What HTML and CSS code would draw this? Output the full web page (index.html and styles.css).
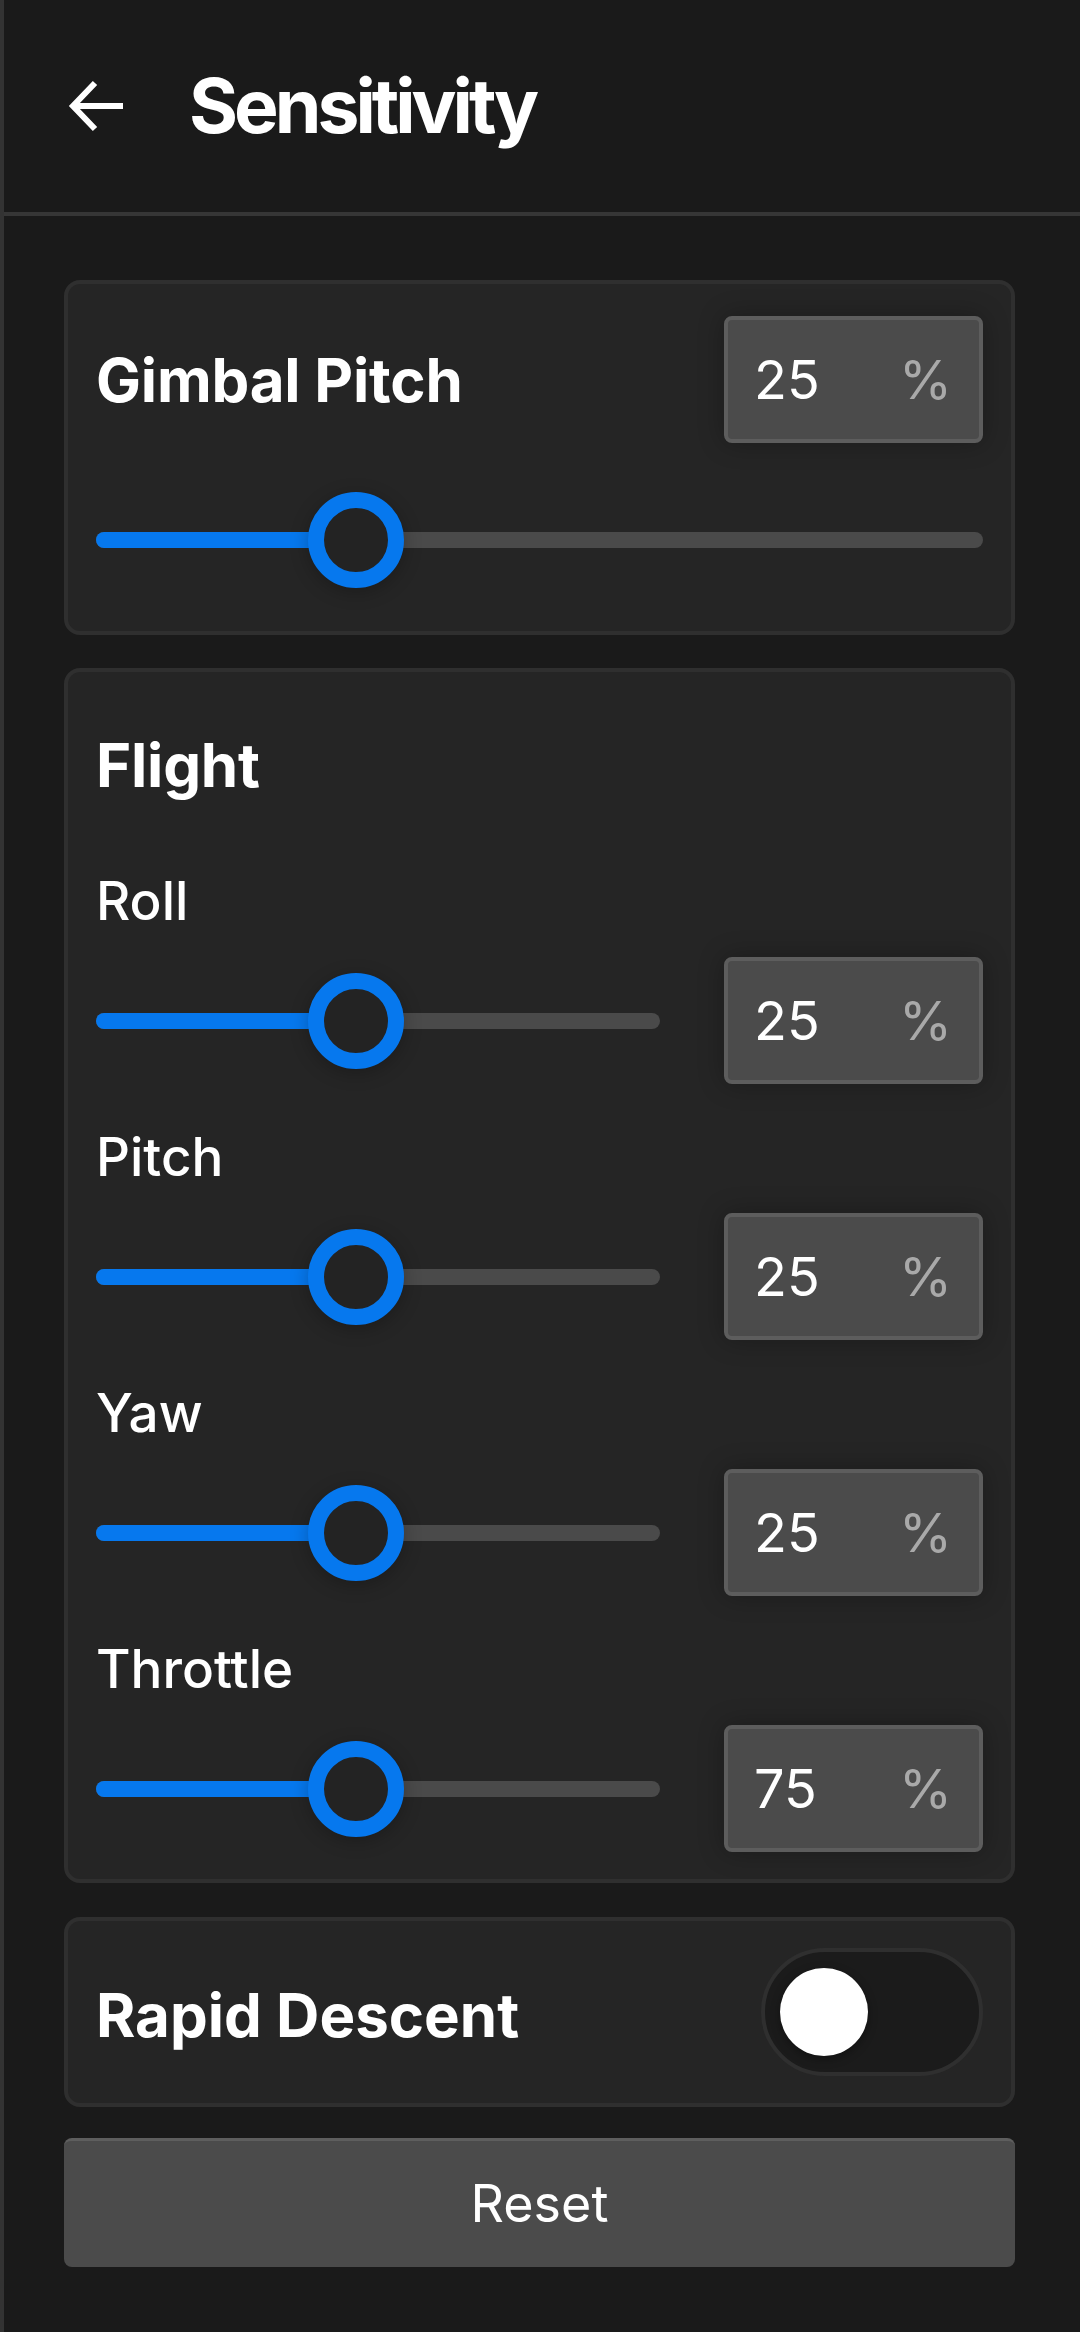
FILE: index.html
```html
<!DOCTYPE html>
<html lang="en">
<head>
<meta charset="utf-8">
<meta name="viewport" content="width=1080">
<title>Sensitivity</title>
<link rel="stylesheet" href="styles.css">
</head>
<body>
<header class="topbar">
  <svg class="back" viewBox="0 0 60 60" width="60" height="60" aria-hidden="true">
    <polyline points="29,7 7,30 29,53" fill="none" stroke="#fff" stroke-width="6" stroke-linejoin="miter" stroke-linecap="butt"/>
    <line x1="8" y1="30" x2="57" y2="30" stroke="#fff" stroke-width="6"/>
  </svg>
  <h1 class="title">Sensitivity</h1>
</header>

<main class="content">
  <section class="card card-gimbal">
    <div class="card-head">
      <h2 class="card-title">Gimbal Pitch</h2>
      <div class="value-box"><span class="num">25</span><span class="unit">%</span></div>
    </div>
    <div class="slider slider-gimbal">
      <div class="track"><div class="fill" style="width:260px"></div></div>
      <div class="thumb" style="left:212px"></div>
    </div>
  </section>

  <section class="card card-flight">
    <h2 class="card-title flight-title">Flight</h2>

    <div class="axis">
      <div class="axis-label">Roll</div>
      <div class="axis-row">
        <div class="slider">
          <div class="track"><div class="fill" style="width:260px"></div></div>
          <div class="thumb" style="left:212px"></div>
        </div>
        <div class="value-box"><span class="num">25</span><span class="unit">%</span></div>
      </div>
    </div>

    <div class="axis">
      <div class="axis-label">Pitch</div>
      <div class="axis-row">
        <div class="slider">
          <div class="track"><div class="fill" style="width:260px"></div></div>
          <div class="thumb" style="left:212px"></div>
        </div>
        <div class="value-box"><span class="num">25</span><span class="unit">%</span></div>
      </div>
    </div>

    <div class="axis">
      <div class="axis-label">Yaw</div>
      <div class="axis-row">
        <div class="slider">
          <div class="track"><div class="fill" style="width:260px"></div></div>
          <div class="thumb" style="left:212px"></div>
        </div>
        <div class="value-box"><span class="num">25</span><span class="unit">%</span></div>
      </div>
    </div>

    <div class="axis">
      <div class="axis-label">Throttle</div>
      <div class="axis-row">
        <div class="slider">
          <div class="track"><div class="fill" style="width:260px"></div></div>
          <div class="thumb" style="left:212px"></div>
        </div>
        <div class="value-box"><span class="num">75</span><span class="unit">%</span></div>
      </div>
    </div>
  </section>

  <section class="card card-toggle">
    <h2 class="card-title toggle-title">Rapid Descent</h2>
    <div class="switch"><div class="knob"></div></div>
  </section>

  <button class="reset" type="button">Reset</button>
</main>
</body>
</html>
```

FILE: styles.css
```css
* {
  box-sizing: border-box;
}

html, body {
  margin: 0;
  padding: 0;
}

body {
  min-height: 100vh;
  background: #1a1a1a;
  border-left: 4px solid #333333;
  color: #ffffff;
  font-family: Inter, "Noto Sans", "Liberation Sans", sans-serif;
}

.topbar {
  height: 216px;
  border-bottom: 4px solid #363636;
  display: flex;
  align-items: center;
  padding-left: 62px;
}

.back {
  display: block;
  flex: none;
}

.title {
  margin: 0 0 0 63px;
  font-size: 75px;
  font-weight: 700;
  line-height: 88px;
  letter-spacing: -4px;
}

.content {
  padding: 64px 65px 40px 60px;
  display: flex;
  flex-direction: column;
}

.card {
  background: #252525;
  border: 4px solid #2f2f2f;
  border-radius: 16px;
  padding: 0 28px;
}

.card-title {
  margin: 0;
  font-size: 60px;
  font-weight: 700;
  line-height: 72px;
  letter-spacing: -0.2px;
}

/* Gimbal card */
.card-gimbal {
  padding-top: 32px;
  padding-bottom: 28px;
}

.card-head {
  display: flex;
  justify-content: space-between;
  align-items: center;
}

.slider-gimbal {
  margin-top: 34px;
}

/* Value input box */
.value-box {
  flex: none;
  width: 259px;
  height: 127px;
  background: #4b4b4b;
  border: 4px solid #5d5d5d;
  border-radius: 8px;
  box-shadow: 0 0 26px rgba(0, 0, 0, 0.28);
  display: flex;
  align-items: center;
  justify-content: space-between;
  padding: 0 27px 0 26px;
  font-size: 54px;
  line-height: 64px;
  font-weight: 400;
}

.num {
  color: #ffffff;
}

.unit {
  color: #a9a9a9;
}

/* Slider */
.slider {
  position: relative;
  height: 126px;
  display: flex;
  align-items: center;
  flex: 1;
}

.track {
  width: 100%;
  height: 16px;
  border-radius: 8px;
  background: #4a4a4a;
  overflow: hidden;
}

.fill {
  height: 100%;
  background: #0678ee;
}

.thumb {
  position: absolute;
  top: 15px;
  width: 96px;
  height: 96px;
  border-radius: 50%;
  border: 16px solid #0678ee;
  background: #232323;
  box-shadow: 0 4px 18px rgba(0, 0, 0, 0.25);
}

/* Flight card */
.card-flight {
  margin-top: 33px;
  padding-top: 57px;
  padding-bottom: 27px;
}

.flight-title {
  margin-bottom: 69px;
}

.axis + .axis {
  margin-top: 42px;
}

.axis-label {
  font-size: 53px;
  line-height: 62px;
  font-weight: 500;
}

.axis-row {
  margin-top: 25px;
  display: flex;
  align-items: center;
  gap: 64px;
  height: 127px;
}

/* Toggle card */
.card-toggle {
  margin-top: 34px;
  padding-top: 27px;
  padding-bottom: 27px;
  display: flex;
  align-items: center;
  justify-content: space-between;
}

.toggle-title {
  padding-top: 6px;
  letter-spacing: 0;
}

.switch {
  width: 222px;
  height: 128px;
  border-radius: 64px;
  background: #1b1b1b;
  border: 4px solid #2f2f2f;
  display: flex;
  align-items: center;
  padding-left: 15px;
}

.knob {
  width: 88px;
  height: 88px;
  border-radius: 50%;
  background: #ffffff;
  box-shadow: 0 3px 10px rgba(0, 0, 0, 0.35);
}

/* Reset button */
.reset {
  margin-top: 31px;
  height: 129px;
  width: 100%;
  background: #4b4b4b;
  border: none;
  border-top: 3px solid #5e5e5e;
  border-radius: 8px;
  color: #ffffff;
  font-family: Inter, "Noto Sans", "Liberation Sans", sans-serif;
  font-size: 52px;
  font-weight: 400;
  line-height: 62px;
  padding: 0;
}
```
